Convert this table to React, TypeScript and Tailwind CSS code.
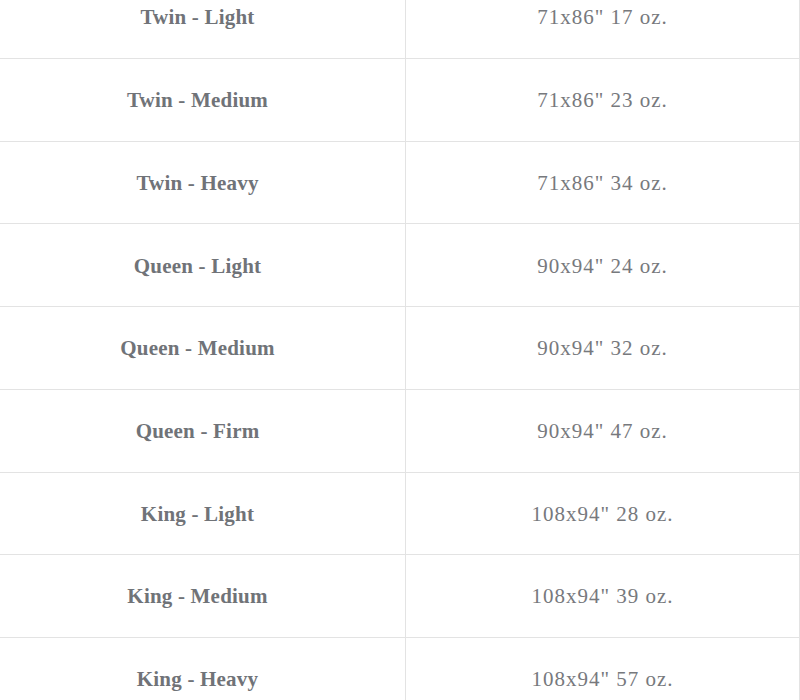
const rows: [string, string][] = [
  ['Twin - Light', '71x86" 17 oz.'],
  ['Twin - Medium', '71x86" 23 oz.'],
  ['Twin - Heavy', '71x86" 34 oz.'],
  ['Queen - Light', '90x94" 24 oz.'],
  ['Queen - Medium', '90x94" 32 oz.'],
  ['Queen - Firm', '90x94" 47 oz.'],
  ['King - Light', '108x94" 28 oz.'],
  ['King - Medium', '108x94" 39 oz.'],
  ['King - Heavy', '108x94" 57 oz.'],
];

export default function App() {
  return (
    <div className="h-[700px] w-[800px] overflow-hidden bg-white">
      <div
        className="mt-[-23.7px] w-[800px] border-r border-[#e3e3e3]"
        style={{ fontFamily: '"Liberation Serif", "DejaVu Serif", serif' }}
      >
        {rows.map(([size, weight]) => (
          <div key={size} className="grid h-[82.71px] grid-cols-[406px_1fr] border-b border-[#e3e3e3]">
            <div className="flex items-center justify-center border-r border-[#e3e3e3] pt-[2px] pr-[10px] text-[21px] font-bold tracking-[0.2px] text-[#707378]">
              {size}
            </div>
            <div className="flex items-center justify-center pt-[2px] text-[21px] tracking-[1px] text-[#77797d]">
              {weight}
            </div>
          </div>
        ))}
      </div>
    </div>
  );
}
